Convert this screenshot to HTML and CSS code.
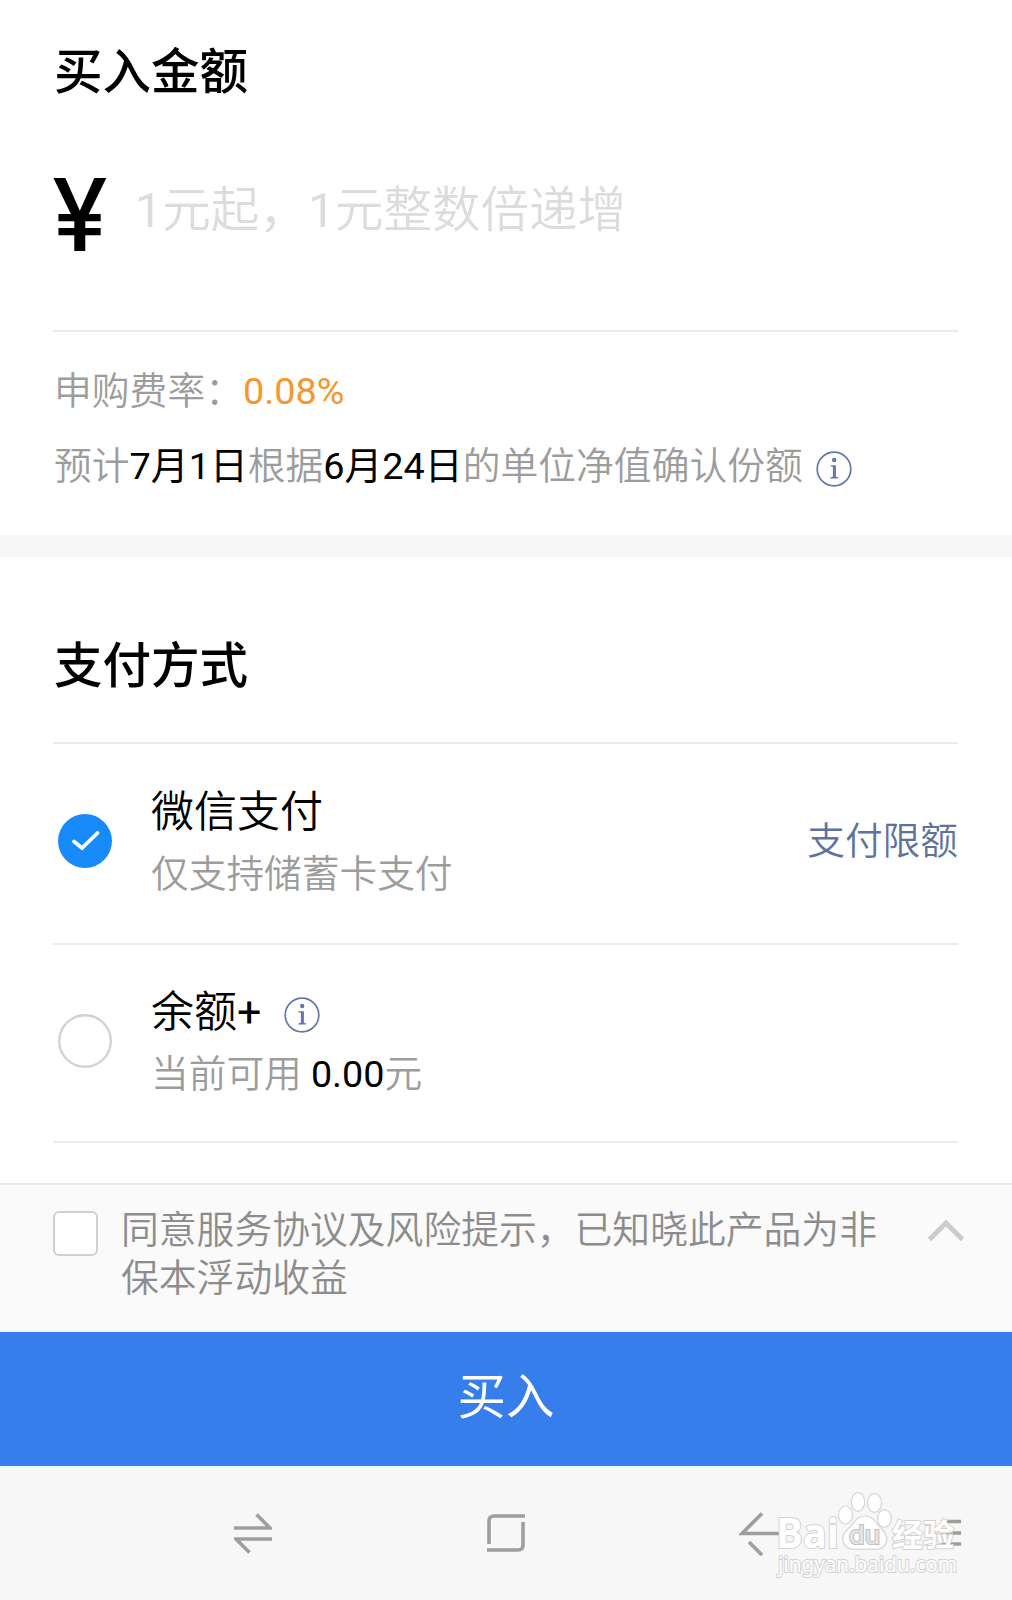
FILE: index.html
```html
<!DOCTYPE html>
<html lang="zh-CN">
<head>
<meta charset="utf-8">
<title>买入</title>
<link rel="stylesheet" href="styles.css">
</head>
<body>
<main class="page">
  <section class="amount">
    <h1 class="heading">买入金额</h1>
    <div class="amount-field">
      <span class="currency">¥</span>
      <span class="placeholder"><span class="latin">1</span>元起，<span class="latin">1</span>元整数倍递增</span>
    </div>
    <p class="note">申购费率：<span class="rate">0.08%</span></p>
    <p class="note note-confirm">预计<b class="strong">7月1日</b>根据<b class="strong">6月24日</b>的单位净值确认份额
      <svg class="info" viewBox="0 0 36 36"><circle cx="18" cy="18" r="16.8"/><circle class="ink" cx="18.2" cy="9" r="2.2"/><path class="ink" d="M14.4 14.2H19.9V25.8L22.2 26.4V27.4H14.2V26.4L16.9 25.8V15.8L14.4 15.2Z"/></svg>
    </p>
  </section>

  <section class="payment">
    <h2 class="heading">支付方式</h2>
    <div class="method">
      <svg class="radio" viewBox="0 0 54 54"><circle cx="27" cy="27" r="27" fill="#178bfa"/><path d="M16 27.5L24 34L39.5 19" fill="none" stroke="#fff" stroke-width="3.8" stroke-linecap="round" stroke-linejoin="miter"/></svg>
      <div class="method-text">
        <div class="method-name">微信支付</div>
        <div class="method-desc">仅支持储蓄卡支付</div>
      </div>
      <a class="limit">支付限额</a>
    </div>
    <div class="method method-balance">
      <svg class="radio" viewBox="0 0 54 54"><circle cx="27" cy="27" r="25.8" fill="#fff" stroke="#d2d2d2" stroke-width="2.4"/></svg>
      <div class="method-text">
        <div class="method-name"><span>余额<span class="latin">+</span></span>
          <svg class="info" viewBox="0 0 36 36"><circle cx="18" cy="18" r="16.8"/><circle class="ink" cx="18.2" cy="9" r="2.2"/><path class="ink" d="M14.4 14.2H19.9V25.8L22.2 26.4V27.4H14.2V26.4L16.9 25.8V15.8L14.4 15.2Z"/></svg>
        </div>
        <div class="method-desc">当前可用 <b class="strong">0.00</b>元</div>
      </div>
    </div>
  </section>

  <section class="agreement">
    <span class="checkbox"></span>
    <p class="terms">同意服务协议及风险提示，已知晓此产品为非保本浮动收益</p>
    <svg class="chevron" viewBox="0 0 38 24"><path d="M2.5 20.5L19 4L35.5 20.5" fill="none" stroke="#cbcbcb" stroke-width="4.8"/></svg>
  </section>

  <button class="buy">买入</button>

  <nav class="navbar">
    <svg class="nav-icon" viewBox="0 0 38 42"><path d="M0 16H36L22.5 2.5M38 27H2L15.5 40.5"/></svg>
    <svg class="nav-icon" viewBox="0 0 38 42"><path d="M38 4H7Q2 4 2 9V32M36 10V33Q36 38 31 38H0"/></svg>
    <svg class="nav-icon nav-back" viewBox="0 0 44 46"><path d="M44 23.5H3L23 3.5M10 32L23 45"/></svg>
    <svg class="nav-icon nav-menu" viewBox="0 0 20 30"><path d="M0 3.5H20M0 15H20M0 26H20"/></svg>
    <svg class="watermark" viewBox="0 0 190 96">
      <g fill="#fff" stroke="#d6d6d6" stroke-width="1.2">
        <ellipse cx="72.5" cy="31" rx="7" ry="9"/>
        <ellipse cx="85" cy="18" rx="6.7" ry="9.3"/>
        <ellipse cx="101.5" cy="19" rx="7" ry="9.3"/>
        <ellipse cx="111.5" cy="34.5" rx="7" ry="8.8"/>
        <path d="M92 32C100 32 102 38 107 43C112 48 115 52 113.5 57C111 68 101 65 92 65C83 65 73 68 70 57C68.5 52 71 48 77 43C82 38 84 32 92 32Z"/>
      </g>
      <text class="wm-brand" x="3" y="64" font-size="41" textLength="63" lengthAdjust="spacingAndGlyphs">Bai</text>
      <text class="wm-du" x="76" y="60" font-size="25" textLength="31" lengthAdjust="spacingAndGlyphs">du</text>
      <text class="wm-brand wm-cjk" x="119" y="62" font-size="31" textLength="62" lengthAdjust="spacingAndGlyphs">经验</text>
      <text class="wm-url" x="5" y="88" font-size="21" textLength="179" lengthAdjust="spacingAndGlyphs">jingyan.baidu.com</text>
    </svg>
  </nav>
</main>
</body>
</html>
```
FILE: styles.css
```css
* {
  box-sizing: border-box;
}

body {
  margin: 0;
  background: #fff;
  color: #000;
  font-family: Roboto, "Noto Sans CJK SC", sans-serif;
}

.page {
  display: flex;
  flex-direction: column;
  width: 1012px;
  height: 1600px;
}

.latin {
  font-weight: 400;
}

.amount {
  height: 557px;
  padding: 43px 54px 0 53px;
  border-bottom: 22px solid #f7f7f7;
}

.heading {
  margin: 0;
  padding-left: 1px;
  font-size: 48.5px;
  font-weight: 500;
  line-height: 60px;
}

.amount-field {
  display: flex;
  height: 229px;
  padding-top: 54px;
  border-bottom: 2px solid #ebebeb;
}

.currency {
  width: 82px;
  margin-left: -1px;
  margin-right: 1px;
  font-family: Inter, sans-serif;
  font-size: 100px;
  font-weight: 500;
  line-height: 115px;
}

.placeholder {
  color: #dcdcdc;
  font-size: 48.5px;
  font-weight: 350;
  line-height: 107px;
}

.note {
  margin: 0;
  padding-left: 1px;
  color: #9c9c9c;
  font-size: 37.8px;
  font-weight: 350;
  line-height: 60px;
}

.amount-field + .note {
  margin-top: 29px;
}

.note-confirm {
  display: flex;
  align-items: center;
  margin-top: 15px;
}

.rate {
  color: #f6962f;
  font-weight: 400;
}

.strong {
  color: #000;
  font-weight: 400;
}

.info {
  width: 36px;
  height: 36px;
  fill: none;
  stroke: #6079a8;
  stroke-width: 1.7;
}

.info .ink {
  fill: #6079a8;
  stroke: none;
}

.note-confirm .info {
  margin: 5px 0 0 13px;
}

.payment {
  height: 626px;
  padding: 80px 54px 0 53px;
}

.payment .heading {
  height: 105px;
}

.method {
  display: flex;
  height: 201px;
  padding-top: 34px;
  border-top: 2px solid #ebebeb;
}

.method-balance {
  height: 200px;
  padding-top: 33px;
  border-bottom: 2px solid #ebebeb;
}

.radio {
  width: 54px;
  height: 54px;
  margin: 36px 39px 0 5px;
}

.method-text {
  flex: 1;
}

.method-name {
  display: flex;
  align-items: center;
  height: 60px;
  font-size: 43px;
  font-weight: 350;
}

.method-name .info {
  margin: 13px 0 0 23px;
}

.method-desc {
  height: 60px;
  margin-top: 6px;
  color: #9c9c9c;
  font-size: 37.7px;
  font-weight: 350;
  line-height: 60px;
}

.limit {
  margin-top: 33px;
  color: #5d739e;
  font-size: 37.7px;
  font-weight: 350;
  line-height: 60px;
}

.agreement {
  display: flex;
  height: 149px;
  padding: 22px 47px 0 53px;
  background: #fafafa;
  border-top: 2px solid #e9e9e9;
}

.checkbox {
  width: 45px;
  height: 45px;
  margin: 4px 23px 0 0;
  background: #fff;
  border: 2px solid #d0d0d0;
  border-radius: 6px;
}

.terms {
  width: 762px;
  margin: 0;
  color: #8c8c8c;
  font-size: 37.8px;
  font-weight: 350;
  line-height: 47.7px;
}

.chevron {
  width: 38px;
  height: 24px;
  margin: 12px 0 0 auto;
}

.buy {
  height: 134px;
  padding: 0 0 2px;
  border: 0;
  background: #367eeb;
  color: #fff;
  font: 400 48.5px/130px Roboto, "Noto Sans CJK SC", sans-serif;
}

.navbar {
  position: relative;
  display: flex;
  flex: 1;
  align-items: flex-start;
  padding: 43px 0 0 234px;
  border-top: 3px solid #f4fbff;
  background: #f7f7f7;
}

.nav-icon {
  width: 38px;
  height: 42px;
  margin-right: 215px;
  fill: none;
  stroke: #a09d9d;
  stroke-width: 3.6;
}

.nav-back {
  width: 44px;
  height: 46px;
  margin: -2px 158px 0 -1px;
}

.nav-menu {
  width: 20px;
  height: 30px;
  margin: 6px 0 0;
}

.watermark {
  position: absolute;
  top: 15px;
  left: 773px;
  width: 190px;
  height: 96px;
}

.watermark text {
  fill: #fff;
  stroke: #d2d2d2;
  stroke-width: 2;
  paint-order: stroke;
}

.wm-brand {
  font-family: "Open Sans", sans-serif;
  font-weight: 700;
}

.wm-cjk {
  font-family: "Noto Sans CJK SC", sans-serif;
}

.watermark .wm-du {
  fill: #e6e6e6;
  stroke: #c0c0c0;
  font-family: Roboto, sans-serif;
}

.wm-url {
  font-family: "Noto Sans", sans-serif;
}
```
